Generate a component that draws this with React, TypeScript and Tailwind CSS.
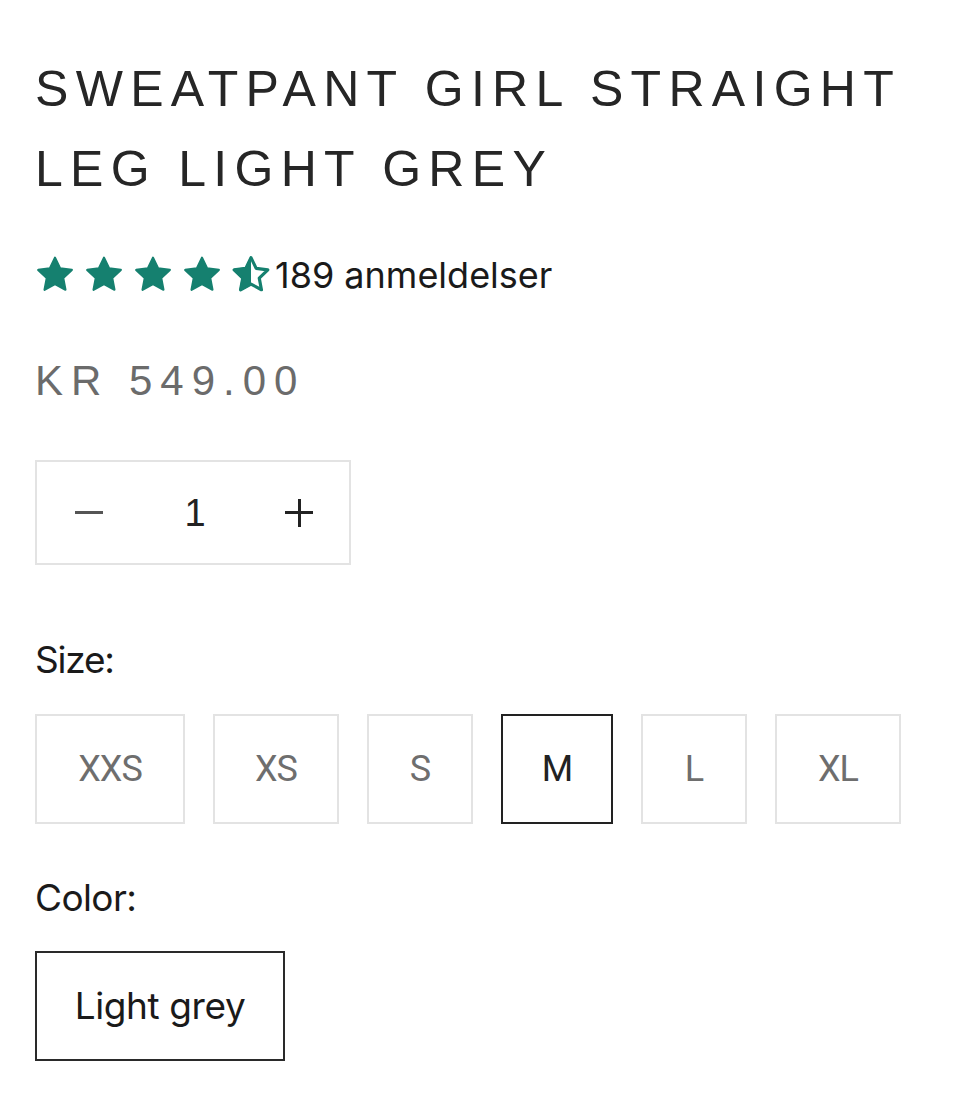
import React from "react";

const TEAL = "#15806f";
const STAR = "M12 1.6l3.1 6.45 7 .9-5.15 4.9 1.32 7L12 17.45l-6.27 3.4 1.32-7L1.9 8.95l7-.9z";

function Star({ half = false }: { half?: boolean }) {
  return (
    <svg width="40" height="40" viewBox="0 0 24 24" className="shrink-0">
      <defs>
        <clipPath id="lefthalf">
          <rect x="0" y="0" width="12" height="24" />
        </clipPath>
      </defs>
      {half ? (
        <>
          <path d={STAR} fill="none" stroke={TEAL} strokeWidth="1.9" strokeLinejoin="round" />
          <path d={STAR} fill={TEAL} stroke={TEAL} strokeWidth="1.3" strokeLinejoin="round" clipPath="url(#lefthalf)" />
        </>
      ) : (
        <path d={STAR} fill={TEAL} stroke={TEAL} strokeWidth="1.3" strokeLinejoin="round" />
      )}
    </svg>
  );
}

const sizes = [
  { label: "XXS", w: "w-[150px]" },
  { label: "XS", w: "w-[126px]" },
  { label: "S", w: "w-[106px]" },
  { label: "M", w: "w-[112px]", selected: true },
  { label: "L", w: "w-[106px]" },
  { label: "XL", w: "w-[126px]" },
];

export default function App() {
  return (
    <div className="min-h-[1095px] w-[960px] bg-white pl-[35px] pt-[49px] text-[#222]">
      <h1 className="font-['Liberation_Sans',Arial,sans-serif] text-[50px] font-normal leading-[80px] tracking-[7.3px] uppercase text-[#262626]">
        Sweatpant girl straight
        <br />
        leg light grey
      </h1>

      <div className="mt-[46px] flex h-[40px] items-center">
        <div className="flex items-center gap-[9px]">
          <Star />
          <Star />
          <Star />
          <Star />
          <Star half />
        </div>
        <span className="ml-[4px] font-['Inter',sans-serif] text-[36px] leading-none text-[#1a1a1a]">
          189 anmeldelser
        </span>
      </div>

      <div className="mt-[65px] font-['Liberation_Sans',Arial,sans-serif] text-[42px] leading-[42px] tracking-[8px] text-[#6b6b6b]">
        KR 549.00
      </div>

      <div className="mt-[58px] flex h-[105px] w-[316px] items-center border-2 border-[#e3e3e3]">
        <div className="flex w-[104px] justify-center">
          <span className="block h-[3px] w-[28px] bg-[#555]" />
        </div>
        <div className="flex w-[108px] justify-center font-['Liberation_Sans',Arial,sans-serif] text-[38px] leading-none text-[#222]">
          1
        </div>
        <div className="relative flex w-[100px] justify-center">
          <span className="relative block h-[28px] w-[28px]">
            <span className="absolute left-0 top-[12.5px] h-[3px] w-[28px] bg-[#222]" />
            <span className="absolute left-[12.5px] top-0 h-[28px] w-[3px] bg-[#222]" />
          </span>
        </div>
      </div>

      <div className="mt-[75px] font-['Inter',sans-serif] text-[37px] leading-[40px] tracking-[-1.2px] text-[#1a1a1a]">
        Size:
      </div>

      <div className="mt-[34px] flex gap-[28px]">
        {sizes.map((s) => (
          <div
            key={s.label}
            className={
              s.w +
              " flex h-[110px] items-center justify-center border-2 font-['Roboto',sans-serif] text-[36px] tracking-[-1px] " +
              (s.selected ? "border-[#222] text-[#222]" : "border-[#e3e3e3] text-[#6e6e6e]")
            }
          >
            {s.label}
          </div>
        ))}
      </div>

      <div className="mt-[54px] font-['Inter',sans-serif] text-[37px] leading-[40px] tracking-[-0.6px] text-[#1a1a1a]">
        Color:
      </div>

      <div className="mt-[33px] flex h-[110px] w-[250px] items-center justify-center border-2 border-[#2a2a2a] font-['Inter',sans-serif] text-[37px] tracking-[-0.4px] text-[#1a1a1a]">
        Light grey
      </div>
    </div>
  );
}
